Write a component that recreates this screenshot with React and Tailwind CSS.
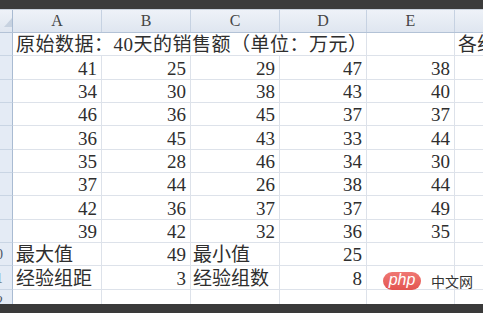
import React from "react";

const DATA = [
  [41, 25, 29, 47, 38],
  [34, 30, 38, 43, 40],
  [46, 36, 45, 37, 37],
  [36, 45, 43, 33, 44],
  [35, 28, 46, 34, 30],
  [37, 44, 26, 38, 44],
  [42, 36, 37, 37, 49],
  [39, 42, 32, 36, 35],
];

const COL_W = ["w-[89px]", "w-[89px]", "w-[89px]", "w-[87px]", "w-[88px]"];
const LETTERS = ["A", "B", "C", "D", "E"];

const cellFont = "font-['Liberation_Serif','Noto_Sans_CJK_SC',serif] text-[19px] leading-[20px] text-[#2e2e2e]";

function RowHead({ n }) {
  return (
    <div className="w-[13px] shrink-0 overflow-hidden bg-[#e4ebf5] border-r border-b border-r-[#a9bbd2] border-b-[#c9d5e4] flex items-end">
      <div className="w-[30px] -ml-[19px] shrink-0 text-center font-['Liberation_Serif',serif] text-[14px] leading-[20px] text-[#4a5565]">
        {n}
      </div>
    </div>
  );
}

function Cell({ w, children, left }) {
  return (
    <div
      className={`${w} shrink-0 border-r border-b border-[#dde2ea] flex items-end whitespace-nowrap overflow-visible ${
        left ? "justify-start pl-[2px]" : "justify-end pr-[4px]"
      } ${cellFont}`}
    >
      {children}
    </div>
  );
}

function Row({ children }) {
  return <div className="flex h-[23.33px] shrink-0">{children}</div>;
}

export default function App() {
  return (
    <div className="w-[483px] h-[313px] overflow-hidden bg-white relative flex flex-col">
      <div className="h-[10px] shrink-0 bg-[#3b3b3b] border-b border-[#c9d1dc]" />

      {/* column headers */}
      <div className="flex h-[23px] shrink-0 bg-gradient-to-b from-[#eef2f8] to-[#dfe6f0] border-b border-[#b3c2d6]">
        <div className="w-[13px] shrink-0 border-r border-[#a9bbd2] relative">
          <svg className="absolute left-[4px] bottom-[5px]" width="8" height="9" viewBox="0 0 8 9">
            <polygon points="8,0 8,9 0,9" fill="#c7d2e0" />
          </svg>
        </div>
        {LETTERS.map((l, i) => (
          <div
            key={l}
            className={`${COL_W[i]} shrink-0 border-r border-[#c6d2e2] flex items-center justify-center font-['Liberation_Serif',serif] text-[16px] text-[#454545]`}
          >
            {l}
          </div>
        ))}
        <div className="flex-1" />
      </div>

      <div className="flex-1 overflow-hidden flex flex-col">
        {/* title row, text runs over B..D */}
        <Row>
          <RowHead n={1} />
          <div className={`w-[354px] shrink-0 border-r border-b border-[#dde2ea] flex items-end pl-[3px] whitespace-nowrap tracking-[0.5px] ${cellFont}`}>
            原始数据：40天的销售额（单位：万元）
          </div>
          <Cell w="w-[88px]" />
          <div className={`flex-1 border-b border-[#dde2ea] flex items-end pl-[3px] whitespace-nowrap overflow-hidden ${cellFont}`}>
            各组频数
          </div>
        </Row>

        {DATA.map((r, ri) => (
          <Row key={ri}>
            <RowHead n={ri + 2} />
            {r.map((v, ci) => (
              <Cell key={ci} w={COL_W[ci]}>
                {v}
              </Cell>
            ))}
            <div className="flex-1 border-b border-[#dde2ea]" />
          </Row>
        ))}

        <Row>
          <RowHead n={10} />
          <Cell w={COL_W[0]} left>
            <span className="pl-[1px]">最大值</span>
          </Cell>
          <Cell w={COL_W[1]}>49</Cell>
          <Cell w={COL_W[2]} left>
            最小值
          </Cell>
          <Cell w={COL_W[3]}>25</Cell>
          <Cell w={COL_W[4]} />
          <div className="flex-1 border-b border-[#dde2ea]" />
        </Row>

        <Row>
          <RowHead n={11} />
          <Cell w={COL_W[0]} left>
            <span className="pl-[1px]">经验组距</span>
          </Cell>
          <Cell w={COL_W[1]}>3</Cell>
          <Cell w={COL_W[2]} left>
            经验组数
          </Cell>
          <Cell w={COL_W[3]}>8</Cell>
          <Cell w={COL_W[4]} />
          <div className="flex-1 border-b border-[#dde2ea]" />
        </Row>

        <Row>
          <RowHead n={12} />
          {COL_W.map((w, i) => (
            <Cell key={i} w={w} />
          ))}
          <div className="flex-1 border-b border-[#dde2ea]" />
        </Row>
      </div>

      <div className="h-[9px] shrink-0 bg-[#3a3a3a]" />

      {/* watermark */}
      <div className="absolute left-[383px] top-[272px] flex items-center gap-[10px]">
        <div className="w-[38px] h-[18px] rounded-full bg-gradient-to-b from-[#ef7773] to-[#e35450] flex items-center justify-center">
          <span className="font-['Liberation_Sans',sans-serif] italic text-[16px] leading-none text-white -mt-[2px]">php</span>
        </div>
        <span className="font-['Noto_Sans_CJK_SC',sans-serif] text-[14px] leading-none text-[#333]">中文网</span>
      </div>
    </div>
  );
}
